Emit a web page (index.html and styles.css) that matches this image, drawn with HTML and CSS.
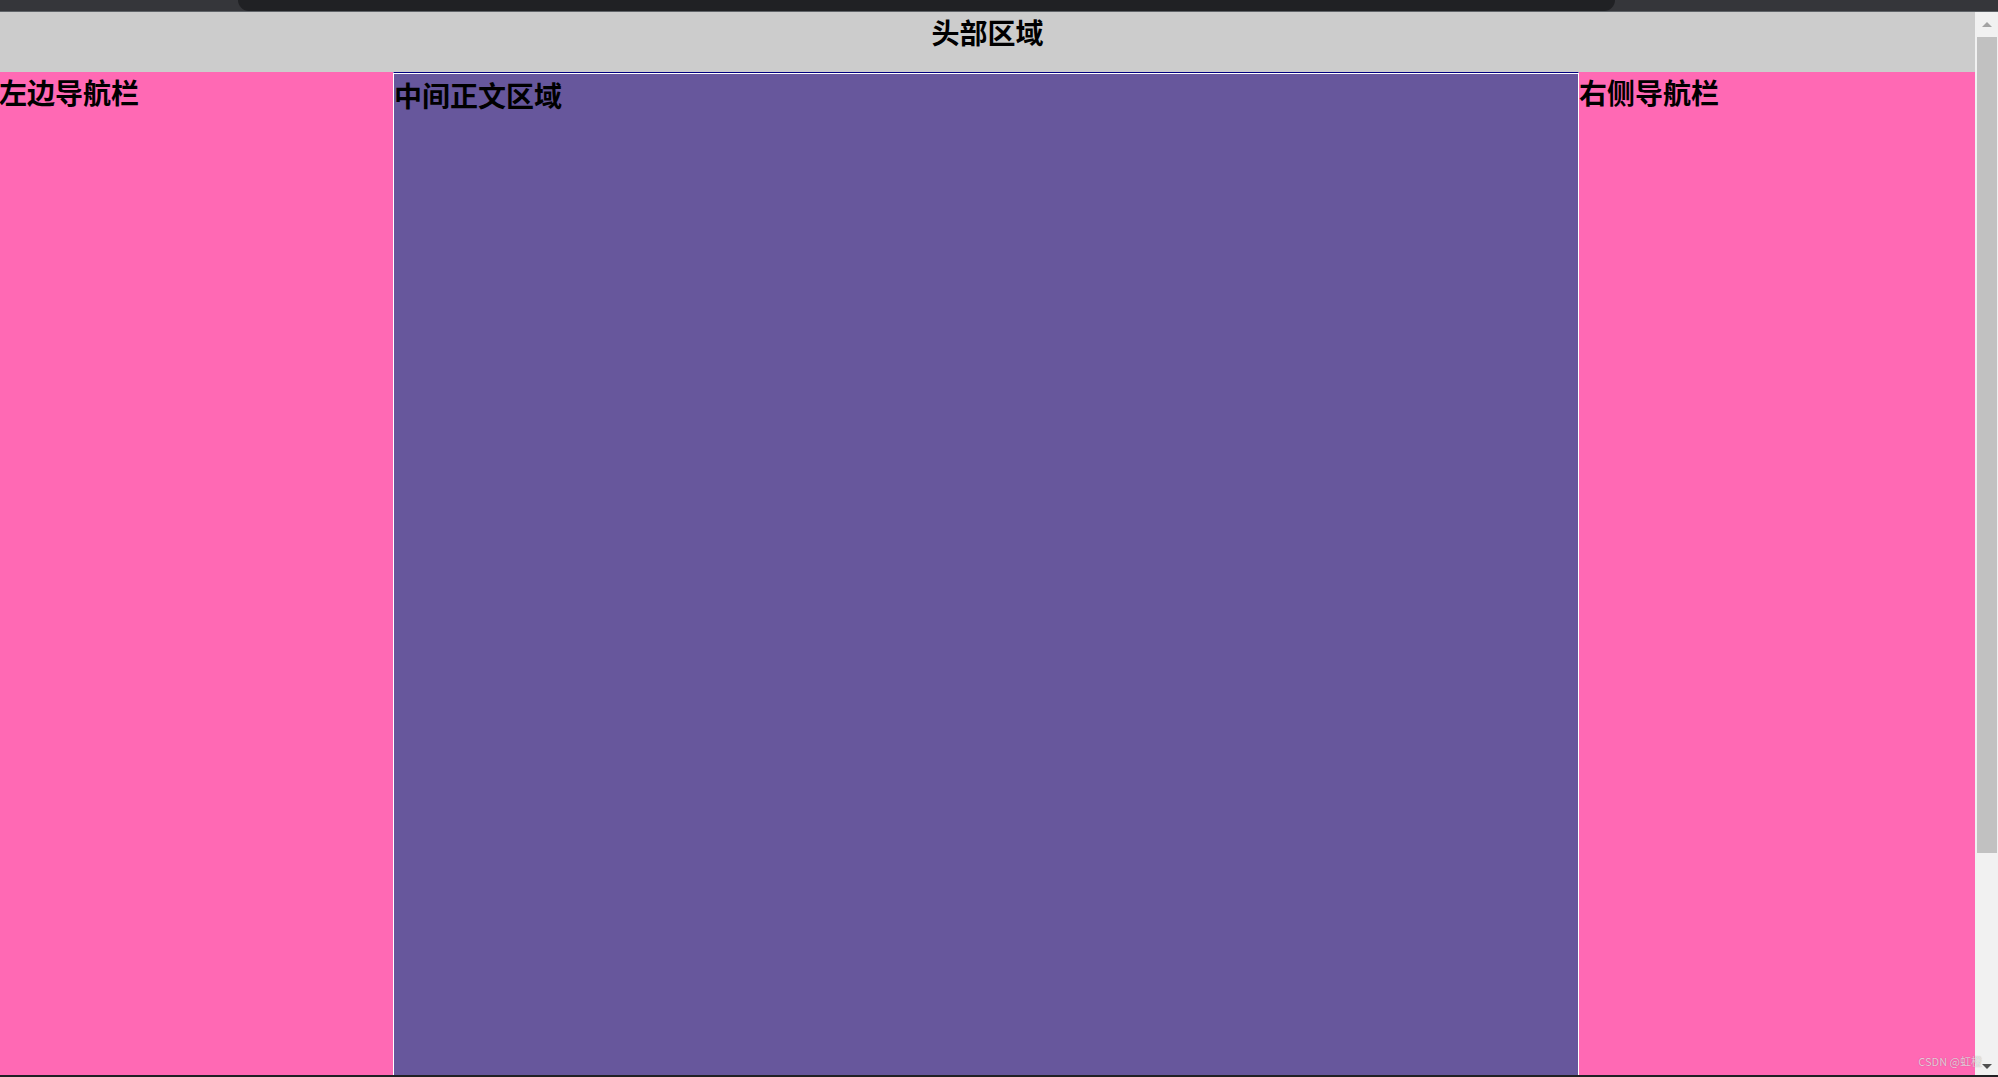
FILE: index.html
```html
<!DOCTYPE html>
<html lang="zh-CN">
<head>
    <meta charset="UTF-8">
    <title>三栏布局</title>
    <link rel="stylesheet" href="styles.css">
</head>
<body>
    <div class="chrome">
        <div class="chrome-tab"></div>
    </div>

    <div class="window">
        <div class="page">
            <div class="header">头部区域</div>
            <div class="columns">
                <div class="left">左边导航栏</div>
                <div class="center">中间正文区域</div>
                <div class="right">右侧导航栏</div>
            </div>
        </div>
        <div class="scrollbar">
            <span class="arrow up"></span>
            <div class="thumb"></div>
            <span class="arrow down"></span>
        </div>
    </div>

    <div class="bottom-bar"></div>
    <span class="watermark">CSDN @虹橙</span>
</body>
</html>
```

FILE: styles.css
```css
body {
    margin: 0;
    height: 1077px;
    overflow: hidden;
    display: flex;
    flex-direction: column;
    font-family: "Noto Sans CJK SC", "Liberation Sans", sans-serif;
    position: relative;
}

.chrome {
    height: 11px;
    background-color: #35363a;
    border-bottom: 1px solid #5f6368;
    display: flex;
    padding-left: 238px;
    padding-right: 383px;
}

.chrome-tab {
    flex: 1;
    background-color: #202124;
    border-radius: 0 0 16px 16px;
}

.window {
    flex: 1;
    display: flex;
    min-height: 0;
}

.page {
    flex: 1;
    display: flex;
    flex-direction: column;
}

.header {
    height: 60px;
    background-color: #cccccc;
    text-align: center;
    font-size: 28px;
    font-weight: bold;
    line-height: 40px;
    color: #000;
}

.columns {
    flex: 1;
    display: flex;
}

.left,
.right,
.center {
    font-size: 28px;
    font-weight: bold;
    line-height: 40px;
    color: #000;
}

.left {
    width: 393px;
    background-color: #ff69b4;
    text-indent: -1px;
}

.center {
    width: 1184px;
    background-color: #67579c;
    border-top: 1px solid #000080;
    border-left: 1px solid #ffffff;
    border-right: 1px solid #ffffff;
    box-shadow: inset 0 1px #ffffff;
    padding-top: 2px;
}

.right {
    flex: 1;
    background-color: #ff69b4;
}

.scrollbar {
    width: 23px;
    background-color: #f1f1f1;
    display: flex;
    flex-direction: column;
    align-items: center;
}

.thumb {
    width: 20px;
    height: 816px;
    margin-left: 1px;
    background-color: #c1c1c1;
}

.arrow {
    width: 0;
    height: 0;
    border-left: 5px solid transparent;
    border-right: 5px solid transparent;
}

.arrow.up {
    border-bottom: 5px solid #a3a3a3;
    margin: 10px 0 10px;
}

.arrow.down {
    border-top: 5px solid #505050;
    margin-top: auto;
    margin-bottom: 6px;
}

.bottom-bar {
    height: 2px;
    background-color: #202124;
}

.watermark {
    position: absolute;
    right: 16px;
    bottom: 8px;
    font-size: 11px;
    color: rgba(255, 255, 255, 0.7);
    text-shadow: 0 0 1px rgba(0, 0, 0, 0.35);
}
```
